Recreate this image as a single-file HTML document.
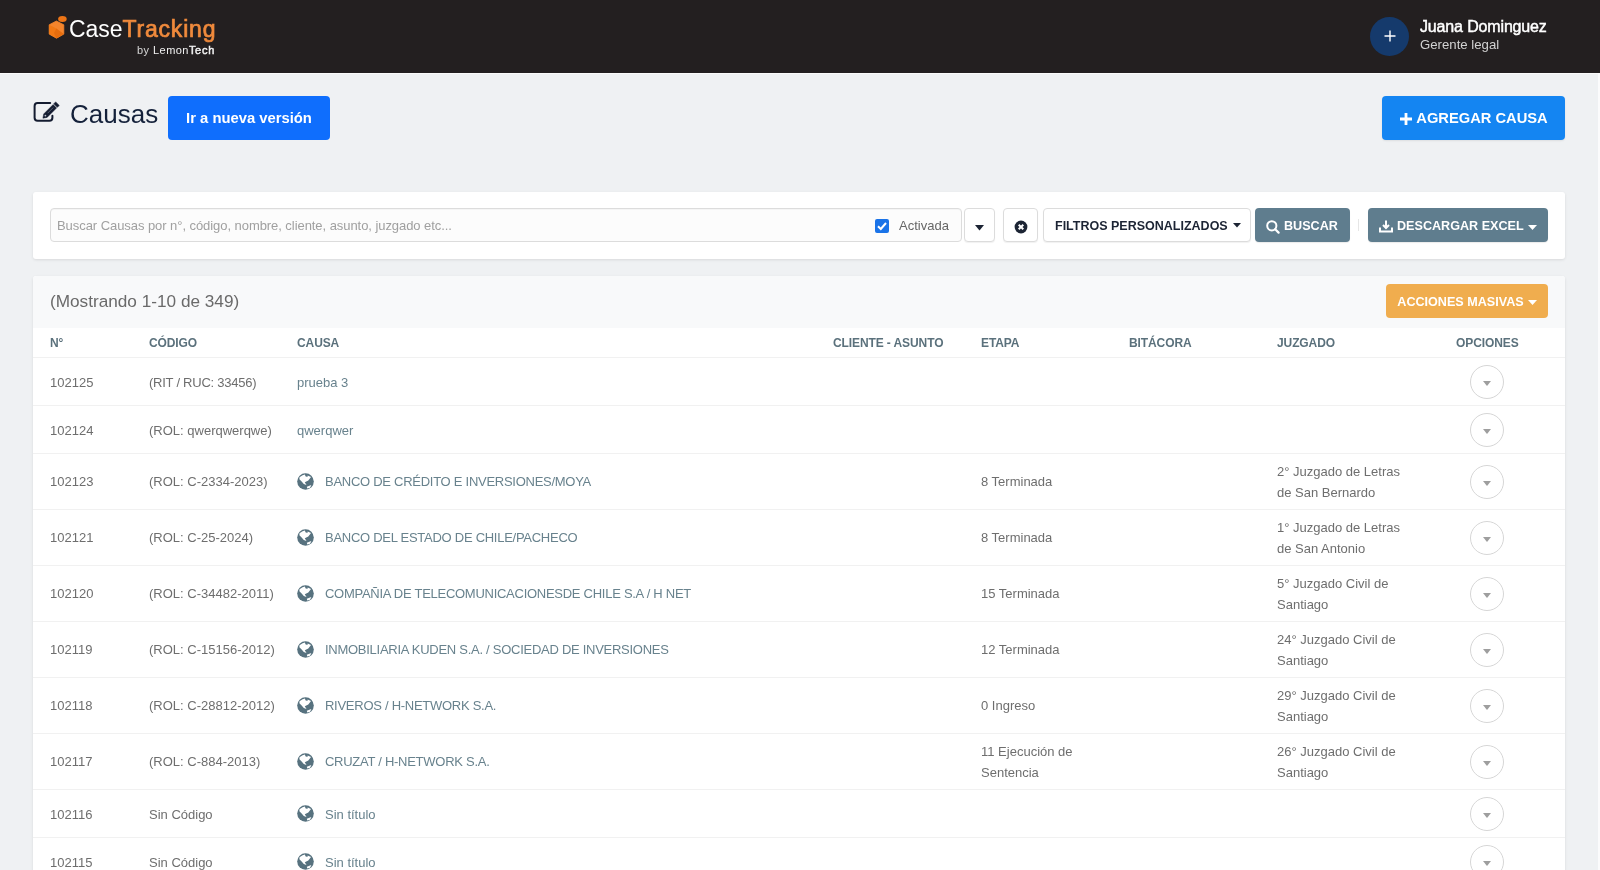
<!DOCTYPE html>
<html lang="es">
<head>
<meta charset="utf-8">
<title>Causas</title>
<style>
*{box-sizing:border-box;margin:0;padding:0}
html,body{width:1600px;height:870px;overflow:hidden}
body{background:#eff1f3;font-family:"Liberation Sans",sans-serif;position:relative;color:#666}
.abs{position:absolute}
#page{position:absolute;left:0;top:0;width:1600px;height:870px;overflow:hidden;will-change:transform}
#topbar{position:absolute;left:0;top:0;width:1600px;height:74px;background:#231f20;border-bottom:1px solid #fafafa}
#rstrip{position:absolute;left:1598px;top:73px;width:2px;height:797px;background:#fbfbfc}
.logo-t{position:absolute;left:69px;top:14px;font-size:23px;line-height:30px;white-space:nowrap;letter-spacing:-0.05px}
.logo-t .c{color:#fff}
.logo-t .t{color:#f08a3c;font-weight:normal;-webkit-text-stroke:.7px #f08a3c;letter-spacing:.8px}
.logo-by{position:absolute;left:137px;top:44px;font-size:11px;line-height:13px;color:#d6d6d6;white-space:nowrap;letter-spacing:.45px}
.logo-by b{color:#f2f2f2;font-weight:normal}
.avatar{position:absolute;left:1370px;top:17px;width:39px;height:39px;border-radius:50%;background:#153a6c}
.uname{position:absolute;left:1420px;top:18px;font-size:16px;line-height:18px;color:#fff;font-weight:normal;-webkit-text-stroke:.45px #fff;white-space:nowrap;letter-spacing:-0.15px}
.urole{position:absolute;left:1420px;top:37px;font-size:13.2px;line-height:16px;color:#d2d2d2;white-space:nowrap}
.title{position:absolute;left:70px;top:99px;font-size:26px;line-height:30px;color:#14213a;white-space:nowrap}
.btn{position:absolute;border-radius:4px;color:#fff;font-weight:bold;white-space:nowrap;display:flex;align-items:center;justify-content:center}
.b-new{left:168px;top:96px;width:162px;height:44px;background:#0f6efd;font-size:14.8px;padding-bottom:1px}
.b-add{left:1382px;top:96px;width:183px;height:44px;background:#1485f2;font-size:14.7px;box-shadow:0 1px 2px rgba(0,0,0,.08)}
.card{position:absolute;background:#fff;border-radius:3px;box-shadow:0 1px 3px rgba(0,0,0,.10)}
.search{left:33px;top:192px;width:1532px;height:67px}
.inp{position:absolute;left:50px;top:208px;width:912px;height:34px;border:1px solid #dcdcdc;border-radius:4px;background:#fcfcfc;box-shadow:inset 0 1px 1px rgba(0,0,0,.03)}
.ph{position:absolute;left:57px;top:218px;font-size:13px;line-height:15px;color:#a0a0a0;white-space:nowrap;letter-spacing:-0.06px}
.chk{position:absolute;left:875px;top:219px;width:14px;height:14px;border-radius:2px;background:#1a73e8}
.act{position:absolute;left:899px;top:218px;font-size:13px;line-height:15px;color:#666;white-space:nowrap}
.wbtn{position:absolute;top:208px;height:34px;border:1px solid #dcdcdc;border-radius:4px;background:#fff;box-shadow:0 1px 1px rgba(0,0,0,.06)}
.gbtn{position:absolute;top:208px;height:34px;border-radius:4px;background:#5f7d8e;color:#fff;font-weight:bold;font-size:12.6px;white-space:nowrap;box-shadow:0 1px 1px rgba(0,0,0,.08)}
.list{left:33px;top:276px;width:1532px;height:620px;overflow:hidden}
.lhead{position:absolute;left:0;top:0;width:1532px;height:52px;background:#f8f9fa;border-radius:3px 3px 0 0}
.count{position:absolute;left:50px;top:291px;font-size:17.2px;line-height:20px;color:#6a6a6a;white-space:nowrap}
.b-mas{left:1386px;top:284px;width:162px;height:34px;background:#f0ad4e;font-size:12.6px;padding-top:2px}
.th{position:absolute;top:336px;font-size:12px;line-height:14px;font-weight:bold;color:#5b717c;white-space:nowrap;letter-spacing:-0.1px}
.hl{position:absolute;left:33px;width:1532px;height:1px;background:#f1f1f1}
.td{position:absolute;font-size:13px;line-height:21px;color:#6e6e6e;white-space:nowrap}
.up{letter-spacing:-0.27px}
.lnk{color:#68828d}
.opt{position:absolute;left:1470px;width:34px;height:34px;border:1px solid #d6d6d6;border-radius:50%}
.opt:after{content:"";position:absolute;left:12px;top:15px;border-left:4.5px solid transparent;border-right:4.5px solid transparent;border-top:5px solid #9e9e9e}
.globe{position:absolute;left:297px;width:17px;height:17px}
</style>
</head>
<body>
<div id="page">
<div id="topbar"></div>
<div id="rstrip"></div>

<!-- logo -->
<svg class="abs" style="left:46px;top:13px" width="24" height="28" viewBox="0 0 24 28">
  <polygon points="10.4,8 17.8,11.8 17.8,21.1 10.5,25.2 3.2,21.1 3.2,11.8" fill="#f5852c" stroke="#f5852c" stroke-width=".8" stroke-linejoin="round"/>
  <polygon points="3.2,11.8 10.4,15.5 14.5,23 10.5,25.2 3.2,21.1" fill="#f27914"/>
  <polygon points="10.4,15.5 17.8,21.1 10.5,25.2 8,20" fill="#e66d0e"/>
  <ellipse cx="16.4" cy="5.9" rx="4.3" ry="3" fill="#ec7416"/>
</svg>
<div class="logo-t"><span class="c">Case</span><span class="t">Tracking</span></div>
<div class="logo-by">by <b>Lemon<span style="-webkit-text-stroke:.45px #f2f2f2;letter-spacing:.7px">Tech</span></b></div>

<div class="avatar"></div>
<svg class="abs" style="left:1384px;top:30px" width="12" height="12" viewBox="0 0 12 12"><path d="M6 0.5V11.5M0.5 6H11.5" stroke="#fff" stroke-width="1.4"/></svg>
<div class="uname">Juana Dominguez</div>
<div class="urole">Gerente legal</div>

<!-- title -->
<svg class="abs" style="left:30px;top:96px" width="32" height="30" viewBox="0 0 32 30">
  <path d="M20.2 6.9H7.6Q4.6 6.9 4.6 9.9V21.7Q4.6 24.7 7.6 24.7H19.4Q22.4 24.7 22.4 21.7V19.7" fill="none" stroke="#141c30" stroke-width="2" stroke-linecap="round"/>
  <polygon points="29.19,9.45 25.65,5.91 23.81,7.75 27.35,11.29" fill="#141c30" stroke="#141c30" stroke-width=".6" stroke-linejoin="round"/>
  <polygon points="23.17,8.53 26.57,11.93 17.10,21.40 12.92,22.18 13.70,18.0" fill="#141c30" stroke="#141c30" stroke-width=".5" stroke-linejoin="round"/>
  <path d="M23.2 11.6L17.6 17.2" stroke="#e9edf3" stroke-width=".7" opacity=".45"/>
  <circle cx="15.4" cy="19.6" r=".9" fill="#e9edf3" opacity=".8"/>
</svg>
<div class="title">Causas</div>
<div class="btn b-new">Ir a nueva versión</div>
<div class="btn b-add" style="padding-left:1px"><svg width="12" height="12" viewBox="0 0 12 12" style="margin-right:4px;margin-top:1px"><path d="M6 0V12M0 6H12" stroke="#fff" stroke-width="2.8"/></svg>AGREGAR CAUSA</div>

<!-- search card -->
<div class="card search"></div>
<div class="inp"></div>
<div class="ph">Buscar Causas por n°, código, nombre, cliente, asunto, juzgado etc...</div>
<div class="chk"><svg width="14" height="14" viewBox="0 0 14 14"><path d="M3 7.2L5.8 10L11 4" fill="none" stroke="#fff" stroke-width="2"/></svg></div>
<div class="act">Activada</div>
<div class="wbtn" style="left:964px;width:31px"><svg class="abs" style="left:10px;top:16px" width="9" height="6" viewBox="0 0 9 6"><path d="M0 0H9L4.5 5.5Z" fill="#1c2434"/></svg></div>
<div class="wbtn" style="left:1003px;width:35px"><svg class="abs" style="left:10px;top:11px" width="14" height="14" viewBox="0 0 14 14"><circle cx="7" cy="7" r="6.4" fill="#1c2434"/><path d="M4.7 4.7L9.3 9.3M9.3 4.7L4.7 9.3" stroke="#fff" stroke-width="2"/></svg></div>
<div class="wbtn" style="left:1043px;width:208px"><span class="abs" style="left:11px;top:10px;font-size:12.5px;line-height:15px;font-weight:bold;color:#1c2434;white-space:nowrap">FILTROS PERSONALIZADOS</span><svg class="abs" style="left:189px;top:14px" width="8" height="5" viewBox="0 0 8 5"><path d="M0 0H8L4 4.5Z" fill="#1c2434"/></svg></div>
<div class="gbtn" style="left:1255px;width:95px"><svg class="abs" style="left:11px;top:12px" width="14" height="14" viewBox="0 0 14 14"><circle cx="5.8" cy="5.8" r="4.6" fill="none" stroke="#fff" stroke-width="2"/><path d="M9.2 9.2L12.6 12.6" stroke="#fff" stroke-width="2.2" stroke-linecap="round"/></svg><span class="abs" style="left:29px;top:11px;line-height:15px">BUSCAR</span></div>
<div class="abs" style="left:1358px;top:219px;width:1px;height:12px;background:#e6e6e6"></div>
<div class="gbtn" style="left:1368px;width:180px"><svg class="abs" style="left:11px;top:12px" width="14" height="13" viewBox="0 0 14 13"><path d="M7 0.5V7.5M4 5L7 8L10 5" fill="none" stroke="#fff" stroke-width="2"/><path d="M1 7.5V11.5H13V7.5" fill="none" stroke="#fff" stroke-width="2"/></svg><span class="abs" style="left:29px;top:11px;line-height:15px">DESCARGAR EXCEL</span><svg class="abs" style="left:160px;top:17px" width="9" height="5" viewBox="0 0 9 5"><path d="M0 0H9L4.5 5Z" fill="#fff"/></svg></div>

<!-- list card -->
<div class="card list"><div class="lhead"></div></div>
<div class="count">(Mostrando 1-10 de 349)</div>
<div class="btn b-mas">ACCIONES MASIVAS<svg width="9" height="5" viewBox="0 0 9 5" style="margin-left:4px"><path d="M0 0H9L4.5 5Z" fill="#fff"/></svg></div>

<div class="th" style="left:50px">N°</div>
<div class="th" style="left:149px">CÓDIGO</div>
<div class="th" style="left:297px">CAUSA</div>
<div class="th" style="left:833px">CLIENTE - ASUNTO</div>
<div class="th" style="left:981px">ETAPA</div>
<div class="th" style="left:1129px">BITÁCORA</div>
<div class="th" style="left:1277px">JUZGADO</div>
<div class="th" style="left:1456px">OPCIONES</div>

<div class="hl" style="top:357px"></div>
<div id="rows">
<div class="td" style="left:50px;top:371.5px">102125</div>
<div class="td" style="left:149px;top:371.5px;letter-spacing:-0.25px">(RIT / RUC: 33456)</div>
<div class="td lnk" style="left:297px;top:371.5px">prueba 3</div>
<div class="opt" style="top:364.5px"></div>
<div class="hl" style="top:405px"></div>
<div class="td" style="left:50px;top:419.5px">102124</div>
<div class="td" style="left:149px;top:419.5px">(ROL: qwerqwerqwe)</div>
<div class="td lnk" style="left:297px;top:419.5px">qwerqwer</div>
<div class="opt" style="top:412.5px"></div>
<div class="hl" style="top:453px"></div>
<div class="td" style="left:50px;top:471.0px">102123</div>
<div class="td" style="left:149px;top:471.0px">(ROL: C-2334-2023)</div>
<div class="globe" style="top:473.0px"><svg width="17" height="17" viewBox="0 0 17 17"><circle cx="8.5" cy="8.5" r="8.3" fill="#57727f"/><path d="M2.5 4.3L5.6 2.2L8 1.5L8.4 3.3L10.4 4L10.7 2.6L14 4.1L11.3 7.6L7.8 9.2L9.5 12.1L6.8 11L4.4 8.3L2.4 6.2Z" fill="#fff"/><path d="M9.8 13.8L14.3 12.1L13.1 14.7L10.3 15.6Z" fill="#fff"/></svg></div>
<div class="td lnk up" style="left:325px;top:471.0px">BANCO DE CRÉDITO E INVERSIONES/MOYA</div>
<div class="td" style="left:981px;top:471.0px">8 Terminada</div>
<div class="td" style="left:1277px;top:460.5px">2° Juzgado de Letras<br>de San Bernardo</div>
<div class="opt" style="top:464.5px"></div>
<div class="hl" style="top:509px"></div>
<div class="td" style="left:50px;top:527.0px">102121</div>
<div class="td" style="left:149px;top:527.0px">(ROL: C-25-2024)</div>
<div class="globe" style="top:529.0px"><svg width="17" height="17" viewBox="0 0 17 17"><circle cx="8.5" cy="8.5" r="8.3" fill="#57727f"/><path d="M2.5 4.3L5.6 2.2L8 1.5L8.4 3.3L10.4 4L10.7 2.6L14 4.1L11.3 7.6L7.8 9.2L9.5 12.1L6.8 11L4.4 8.3L2.4 6.2Z" fill="#fff"/><path d="M9.8 13.8L14.3 12.1L13.1 14.7L10.3 15.6Z" fill="#fff"/></svg></div>
<div class="td lnk up" style="left:325px;top:527.0px">BANCO DEL ESTADO DE CHILE/PACHECO</div>
<div class="td" style="left:981px;top:527.0px">8 Terminada</div>
<div class="td" style="left:1277px;top:516.5px">1° Juzgado de Letras<br>de San Antonio</div>
<div class="opt" style="top:520.5px"></div>
<div class="hl" style="top:565px"></div>
<div class="td" style="left:50px;top:583.0px">102120</div>
<div class="td" style="left:149px;top:583.0px">(ROL: C-34482-2011)</div>
<div class="globe" style="top:585.0px"><svg width="17" height="17" viewBox="0 0 17 17"><circle cx="8.5" cy="8.5" r="8.3" fill="#57727f"/><path d="M2.5 4.3L5.6 2.2L8 1.5L8.4 3.3L10.4 4L10.7 2.6L14 4.1L11.3 7.6L7.8 9.2L9.5 12.1L6.8 11L4.4 8.3L2.4 6.2Z" fill="#fff"/><path d="M9.8 13.8L14.3 12.1L13.1 14.7L10.3 15.6Z" fill="#fff"/></svg></div>
<div class="td lnk up" style="left:325px;top:583.0px">COMPAÑIA DE TELECOMUNICACIONESDE CHILE S.A / H NET</div>
<div class="td" style="left:981px;top:583.0px">15 Terminada</div>
<div class="td" style="left:1277px;top:572.5px">5° Juzgado Civil de<br>Santiago</div>
<div class="opt" style="top:576.5px"></div>
<div class="hl" style="top:621px"></div>
<div class="td" style="left:50px;top:639.0px">102119</div>
<div class="td" style="left:149px;top:639.0px">(ROL: C-15156-2012)</div>
<div class="globe" style="top:641.0px"><svg width="17" height="17" viewBox="0 0 17 17"><circle cx="8.5" cy="8.5" r="8.3" fill="#57727f"/><path d="M2.5 4.3L5.6 2.2L8 1.5L8.4 3.3L10.4 4L10.7 2.6L14 4.1L11.3 7.6L7.8 9.2L9.5 12.1L6.8 11L4.4 8.3L2.4 6.2Z" fill="#fff"/><path d="M9.8 13.8L14.3 12.1L13.1 14.7L10.3 15.6Z" fill="#fff"/></svg></div>
<div class="td lnk up" style="left:325px;top:639.0px">INMOBILIARIA KUDEN S.A. / SOCIEDAD DE INVERSIONES</div>
<div class="td" style="left:981px;top:639.0px">12 Terminada</div>
<div class="td" style="left:1277px;top:628.5px">24° Juzgado Civil de<br>Santiago</div>
<div class="opt" style="top:632.5px"></div>
<div class="hl" style="top:677px"></div>
<div class="td" style="left:50px;top:695.0px">102118</div>
<div class="td" style="left:149px;top:695.0px">(ROL: C-28812-2012)</div>
<div class="globe" style="top:697.0px"><svg width="17" height="17" viewBox="0 0 17 17"><circle cx="8.5" cy="8.5" r="8.3" fill="#57727f"/><path d="M2.5 4.3L5.6 2.2L8 1.5L8.4 3.3L10.4 4L10.7 2.6L14 4.1L11.3 7.6L7.8 9.2L9.5 12.1L6.8 11L4.4 8.3L2.4 6.2Z" fill="#fff"/><path d="M9.8 13.8L14.3 12.1L13.1 14.7L10.3 15.6Z" fill="#fff"/></svg></div>
<div class="td lnk up" style="left:325px;top:695.0px">RIVEROS / H-NETWORK S.A.</div>
<div class="td" style="left:981px;top:695.0px">0 Ingreso</div>
<div class="td" style="left:1277px;top:684.5px">29° Juzgado Civil de<br>Santiago</div>
<div class="opt" style="top:688.5px"></div>
<div class="hl" style="top:733px"></div>
<div class="td" style="left:50px;top:751.0px">102117</div>
<div class="td" style="left:149px;top:751.0px">(ROL: C-884-2013)</div>
<div class="globe" style="top:753.0px"><svg width="17" height="17" viewBox="0 0 17 17"><circle cx="8.5" cy="8.5" r="8.3" fill="#57727f"/><path d="M2.5 4.3L5.6 2.2L8 1.5L8.4 3.3L10.4 4L10.7 2.6L14 4.1L11.3 7.6L7.8 9.2L9.5 12.1L6.8 11L4.4 8.3L2.4 6.2Z" fill="#fff"/><path d="M9.8 13.8L14.3 12.1L13.1 14.7L10.3 15.6Z" fill="#fff"/></svg></div>
<div class="td lnk up" style="left:325px;top:751.0px">CRUZAT / H-NETWORK S.A.</div>
<div class="td" style="left:981px;top:740.5px">11 Ejecución de<br>Sentencia</div>
<div class="td" style="left:1277px;top:740.5px">26° Juzgado Civil de<br>Santiago</div>
<div class="opt" style="top:744.5px"></div>
<div class="hl" style="top:789px"></div>
<div class="td" style="left:50px;top:803.5px">102116</div>
<div class="td" style="left:149px;top:803.5px">Sin Código</div>
<div class="globe" style="top:805.0px"><svg width="17" height="17" viewBox="0 0 17 17"><circle cx="8.5" cy="8.5" r="8.3" fill="#57727f"/><path d="M2.5 4.3L5.6 2.2L8 1.5L8.4 3.3L10.4 4L10.7 2.6L14 4.1L11.3 7.6L7.8 9.2L9.5 12.1L6.8 11L4.4 8.3L2.4 6.2Z" fill="#fff"/><path d="M9.8 13.8L14.3 12.1L13.1 14.7L10.3 15.6Z" fill="#fff"/></svg></div>
<div class="td lnk" style="left:325px;top:803.5px">Sin título</div>
<div class="opt" style="top:796.5px"></div>
<div class="hl" style="top:837px"></div>
<div class="td" style="left:50px;top:851.5px">102115</div>
<div class="td" style="left:149px;top:851.5px">Sin Código</div>
<div class="globe" style="top:853.0px"><svg width="17" height="17" viewBox="0 0 17 17"><circle cx="8.5" cy="8.5" r="8.3" fill="#57727f"/><path d="M2.5 4.3L5.6 2.2L8 1.5L8.4 3.3L10.4 4L10.7 2.6L14 4.1L11.3 7.6L7.8 9.2L9.5 12.1L6.8 11L4.4 8.3L2.4 6.2Z" fill="#fff"/><path d="M9.8 13.8L14.3 12.1L13.1 14.7L10.3 15.6Z" fill="#fff"/></svg></div>
<div class="td lnk" style="left:325px;top:851.5px">Sin título</div>
<div class="opt" style="top:844.5px"></div>
<div class="hl" style="top:885px"></div>
</div>
</div>
</body>
</html>
